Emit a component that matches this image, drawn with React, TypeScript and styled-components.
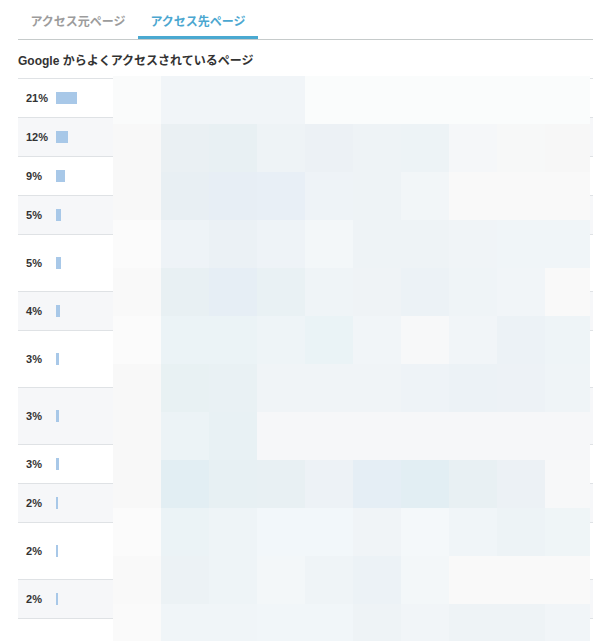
import React from "react";
import styled, { createGlobalStyle } from "styled-components";

const Global = createGlobalStyle`
  html, body { margin: 0; padding: 0; background: #fff; overflow: hidden; }
  body { font-family: "Liberation Sans", "Noto Sans CJK JP", sans-serif; color: #333; }
`;

const Page = styled.div`
  padding: 0 12px 0 18px;
`;

const TabBar = styled.div`
  display: flex;
  border-bottom: 1px solid #c6cbcb;
`;

const Tab = styled.div<{ $active?: boolean }>`
  box-sizing: border-box;
  width: 120px;
  height: 39px;
  padding-top: 5px;
  display: flex;
  align-items: center;
  justify-content: center;
  font-family: "Noto Sans CJK JP", sans-serif;
  font-size: 12px;
  font-weight: 700;
  color: ${(p) => (p.$active ? "#4ba7d0" : "#9c9c9c")};
  border-bottom: 3px solid ${(p) => (p.$active ? "#4aa9d1" : "transparent")};
`;

const Heading = styled.div`
  height: 38px;
  padding-top: 1px;
  box-sizing: border-box;
  display: flex;
  align-items: center;
  font-size: 12px;
  font-weight: 600;
  color: #333;
  font-family: "Liberation Sans", "Noto Sans CJK JP", sans-serif;
`;

const Table = styled.div`
  position: relative;
`;

const Row = styled.div<{ $tall?: boolean; $alt?: boolean }>`
  box-sizing: border-box;
  height: ${(p) => (p.$tall ? 57 : 39)}px;
  border-top: 1px solid #dfe2e5;
  background: ${(p) => (p.$alt ? "#f6f7f9" : "#ffffff")};
  display: flex;
  align-items: center;
  padding-left: 8px;
`;

const Percent = styled.div`
  width: 30px;
  font-size: 11px;
  font-weight: 700;
  color: #333;
`;

const Bar = styled.div`
  height: 12px;
  background: #a8c8e8;
`;

const Mosaic = styled.div`
  position: absolute;
  left: 95px;
  top: -2px;
  display: grid;
  grid-template-columns: repeat(9, 48px) 45px;
  grid-auto-rows: 48px;
`;

const Cell = styled.div<{ $c: string }>`
  background: ${(p) => p.$c};
`;

const rows: { p: number; tall?: boolean }[] = [
  { p: 21 },
  { p: 12 },
  { p: 9 },
  { p: 5 },
  { p: 5, tall: true },
  { p: 4 },
  { p: 3, tall: true },
  { p: 3, tall: true },
  { p: 3 },
  { p: 2 },
  { p: 2, tall: true },
  { p: 2 },
  { p: 1, tall: true },
];

const mosaic: string[][] = [
  ["#fafbfb", "#f1f5f8", "#f1f5f8", "#f1f5f8", "#fafcfc", "#fafcfc", "#fafcfc", "#fafcfc", "#fafcfc", "#fafcfc"],
  ["#f8f8f8", "#eaf0f3", "#e8f0f3", "#eef3f6", "#ecf1f5", "#eef3f6", "#edf3f6", "#f5f7f9", "#f7f8f8", "#f7f7f7"],
  ["#f8f8f8", "#e8eff3", "#e7eef5", "#e8eff6", "#eef3f7", "#eef3f6", "#f2f6f8", "#f9f9f9", "#f9f9f9", "#f9f9f9"],
  ["#fbfbfb", "#eef3f7", "#ebf1f5", "#eef3f7", "#f3f7f9", "#eef3f6", "#eef3f6", "#f0f4f7", "#f0f5f8", "#f0f5f8"],
  ["#f9f9f9", "#e8f0f3", "#e6eef5", "#e9f1f4", "#eff4f7", "#eff3f6", "#ecf2f6", "#eff4f7", "#f1f5f8", "#f9f9f9"],
  ["#fbfbfb", "#ebf3f6", "#ebf3f6", "#eef4f7", "#eaf3f6", "#f1f5f8", "#f7f8f9", "#f1f5f8", "#ecf2f6", "#eef4f7"],
  ["#f8f8f8", "#e8f1f3", "#e9f1f4", "#f0f4f7", "#f0f4f7", "#f0f4f7", "#eef3f7", "#ecf2f6", "#edf2f6", "#eff4f7"],
  ["#f8f8f8", "#ecf3f6", "#e8f1f4", "#f6f7f9", "#f6f7f9", "#f6f7f9", "#f6f7f9", "#f6f7f9", "#f6f7f9", "#f6f7f9"],
  ["#f8f8f8", "#e2eef3", "#e7f0f3", "#e8f0f3", "#edf2f6", "#e5eef5", "#e2eef3", "#e8f0f3", "#ecf1f5", "#f7f8f9"],
  ["#fbfbfb", "#ebf3f6", "#eef4f7", "#f2f7fa", "#f2f7fa", "#f0f4f7", "#f4f8fa", "#f0f5f8", "#edf3f6", "#eff5f7"],
  ["#f9f9f9", "#ecf2f5", "#eef4f7", "#f3f7f9", "#eff4f7", "#ecf2f6", "#f3f7f9", "#f9f9f9", "#f9f9f9", "#f9f9f9"],
  ["#fafafa", "#f0f5f8", "#f0f5f8", "#f1f6f9", "#f1f6f9", "#eef3f6", "#f1f5f8", "#eef3f6", "#eef3f6", "#f1f5f8"],
];

export default function App() {
  return (
    <Page>
      <Global />
      <TabBar>
        <Tab>アクセス元ページ</Tab>
        <Tab $active>アクセス先ページ</Tab>
      </TabBar>
      <Heading>Google からよくアクセスされているページ</Heading>
      <Table>
        {rows.map((r, i) => (
          <Row key={i} $tall={r.tall} $alt={i % 2 === 1}>
            <Percent>{r.p}%</Percent>
            <Bar style={{ width: r.p }} />
          </Row>
        ))}
        <Mosaic aria-hidden>
          {mosaic.flatMap((row, ri) =>
            row.map((c, ci) => <Cell key={`${ri}-${ci}`} $c={c} />)
          )}
        </Mosaic>
      </Table>
    </Page>
  );
}
